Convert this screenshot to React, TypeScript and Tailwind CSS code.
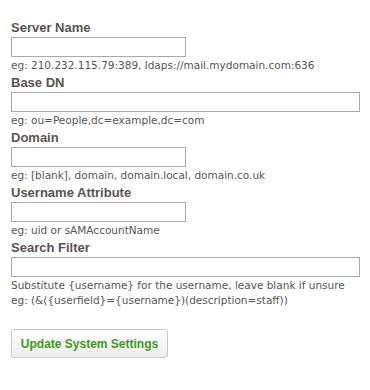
const fields = [
  { label: "Server Name", wide: false, hints: ["eg: 210.232.115.79:389, ldaps://mail.mydomain.com:636"] },
  { label: "Base DN", wide: true, hints: ["eg: ou=People,dc=example,dc=com"] },
  { label: "Domain", wide: false, hints: ["eg: [blank], domain, domain.local, domain.co.uk"] },
  { label: "Username Attribute", wide: false, hints: ["eg: uid or sAMAccountName"] },
  {
    label: "Search Filter",
    wide: true,
    hints: [
      "Substitute {username} for the username, leave blank if unsure",
      "eg: (&({userfield}={username})(description=staff))",
    ],
  },
];

export default function App() {
  return (
    <div className="w-[370px] h-[390px] bg-white px-[11px] pt-[20px] text-[#555] font-['DejaVu_Sans',sans-serif]">
      {fields.map((f) => (
        <div key={f.label} className="mb-[3px]">
          <label className="block font-['Liberation_Sans',sans-serif] text-[13px] font-bold leading-[16px] text-[#5a5252]">
            {f.label}
          </label>
          <input
            type="text"
            className={`block h-[20px] border border-[#a9a9a9] bg-white outline-none mt-[1px] ${f.wide ? "w-[349px]" : "w-[175px]"}`}
          />
          {f.hints.map((h) => (
            <div key={h} className="text-[10.5px] leading-[14px] mt-[1px]">
              {h}
            </div>
          ))}
        </div>
      ))}
      <button className="mt-[19px] h-[29px] w-[157px] rounded-[3px] border border-[#c8c8c8] bg-gradient-to-b from-white to-[#ececec] font-['Liberation_Sans',sans-serif] text-[12px] font-bold text-[#3c9a22]">
        Update System Settings
      </button>
    </div>
  );
}
